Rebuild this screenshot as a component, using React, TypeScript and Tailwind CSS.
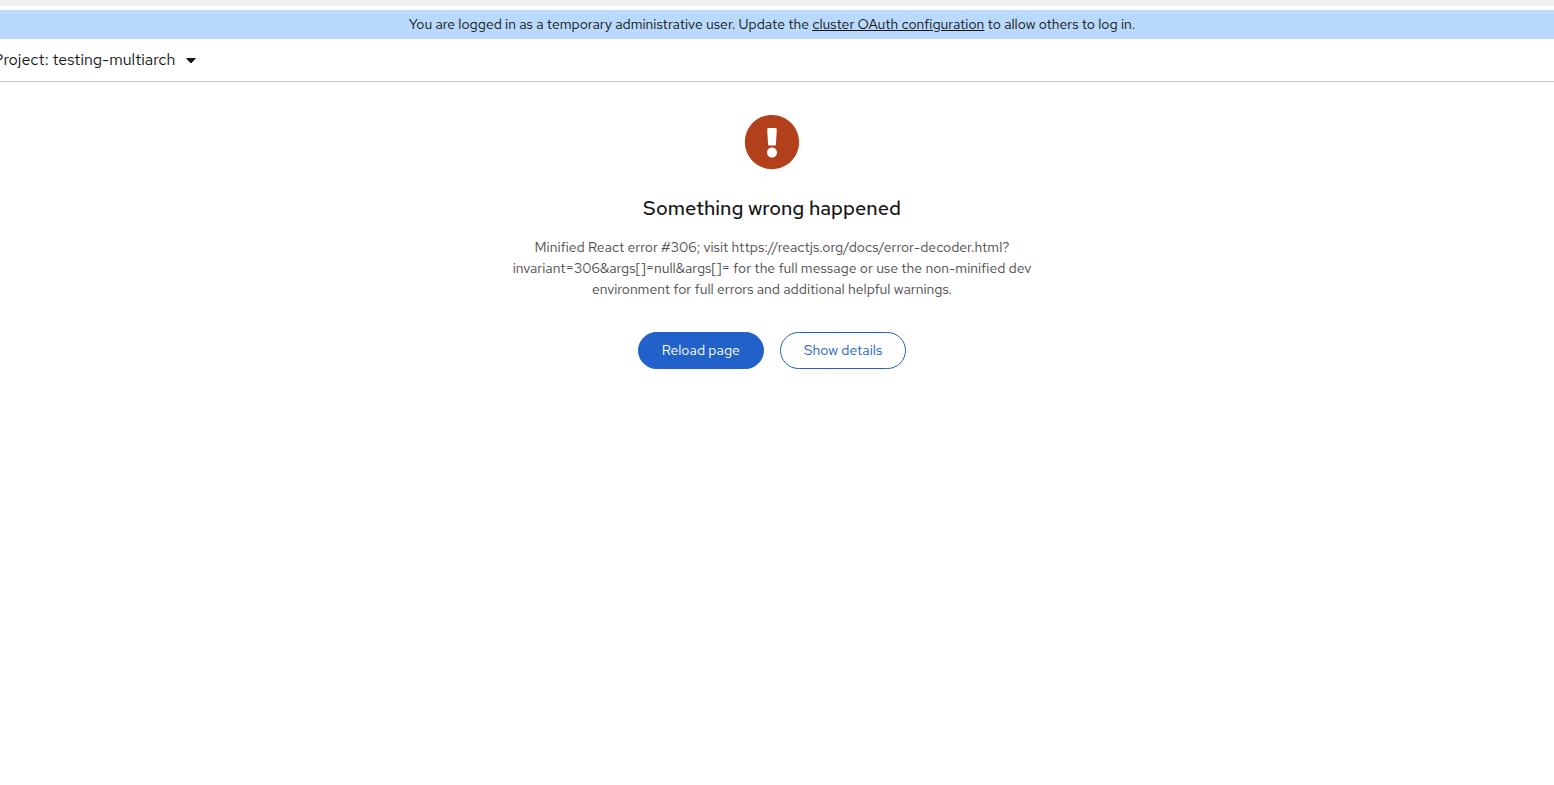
import { FaCaretDown, FaExclamationCircle } from "react-icons/fa";

function LoginNotice() {
  return (
    <div className="bg-[#b9dafc] pr-2.5 text-center text-sm leading-[29px] text-[#151515]">
      You are logged in as a temporary administrative user. Update the{" "}
      <a href="#oauth" className="underline">cluster OAuth configuration</a>{" "}
      to allow others to log in.
    </div>
  );
}

function ProjectBar() {
  return (
    <nav className="flex h-[43px] items-center border-b border-[#c7c7c7]">
      <button type="button" className="-ml-[7px] flex items-center gap-2 text-base text-[#151515]">
        Project: testing-multiarch
        <FaCaretDown aria-hidden="true" className="size-4" />
      </button>
    </nav>
  );
}

function ErrorState() {
  return (
    <main className="flex flex-col items-center pt-8 pr-2.5 text-center">
      <FaExclamationCircle aria-hidden="true" className="size-14 text-[#b1401b]" />
      <h1 className="mt-[23px] text-xl leading-[30px] font-medium text-[#151515]">
        Something wrong happened
      </h1>
      <p className="mt-3.5 w-[530px] max-w-full text-sm leading-[21px] text-[#4d4d4d]">
        Minified React error #306; visit https://reactjs.org/docs/error-decoder.html?
        invariant=306&amp;args[]=null&amp;args[]= for the full message or use the non-minified dev
        environment for full errors and additional helpful warnings.
      </p>
      <div className="mt-8 flex gap-4 text-sm leading-[21px]">
        <button type="button" className="rounded-full border border-[#2161c9] bg-[#2161c9] px-[23px] py-[7px] text-white">Reload page</button>
        <button type="button" className="rounded-full border border-[#2161c9] px-[23px] py-[7px] text-[#2161c9]">Show details</button>
      </div>
    </main>
  );
}

export default function App() {
  return (
    <div className="min-h-screen bg-white font-['Red_Hat_Text','Lato',sans-serif]">
      <div className="mb-1 h-1.5 bg-[#f0f0f0]" />
      <LoginNotice />
      <ProjectBar />
      <ErrorState />
    </div>
  );
}
